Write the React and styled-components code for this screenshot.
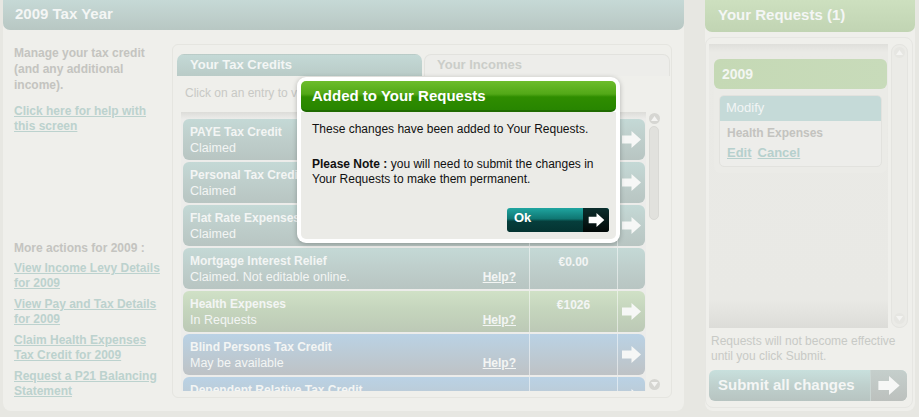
import React from 'react'
import styled, { createGlobalStyle } from 'styled-components'

const GlobalStyle = createGlobalStyle`
  html, body { margin: 0; padding: 0; }
  body {
    background: #e7e7e2;
    font-family: "Liberation Sans", Arial, sans-serif;
    width: 919px;
    height: 417px;
    overflow: hidden;
  }
`

const Page = styled.div`
  position: relative;
  display: flex;
  gap: 21px;
  padding: 0 4px 0 3px;
  height: 417px;
  box-sizing: border-box;
`

const MainPanel = styled.section`
  width: 681px;
  height: 411px;
  display: flex;
  flex-direction: column;
  background: #efefeb;
  border-radius: 0 0 8px 8px;
`

const PanelHeader = styled.h1`
  margin: 0;
  height: ${p => p.$h}px;
  line-height: ${p => p.$h - 2}px;
  padding-left: ${p => p.$pad}px;
  font-size: 15px;
  font-weight: bold;
  color: #f4f6f5;
  border-radius: 0 0 7px 7px;
  background: ${p => p.$green
    ? 'linear-gradient(#cde0bf, #c1d4b3)'
    : 'linear-gradient(#c6d9d6, #b8c7c3)'};
`

const MainBody = styled.div`
  flex: 1;
  display: flex;
  padding: 13px 9px 0 11px;
`

const SideCol = styled.div`
  width: 158px;
  padding-top: 2px;
  display: flex;
  flex-direction: column;
  font-size: 12px;
  line-height: 16px;
  font-weight: bold;
  color: #c4c4c0;
`

const Intro = styled.p`
  margin: 0;
  width: 140px;
`

const SideLink = styled.a`
  display: block;
  width: 150px;
  margin-top: ${p => p.$mt || 5}px;
  line-height: 15px;
  color: #bcd2ce;
  text-decoration: underline;
  cursor: pointer;
`

const MoreTitle = styled.div`
  margin-top: 107px;
  line-height: 15px;
`

const CenterBox = styled.div`
  width: 500px;
  height: 354px;
  margin-top: 1px;
  box-sizing: border-box;
  border: 1px solid #e5e5e0;
  border-radius: 6px;
  padding: 9px 4px 0 4px;
  display: flex;
  flex-direction: column;
`

const Tabs = styled.div`
  display: grid;
  grid-template-columns: 245px 246px;
  gap: 2px;
`

const Tab = styled.div`
  height: 22px;
  box-sizing: border-box;
  line-height: 20px;
  padding-left: 12px;
  font-size: 13px;
  font-weight: bold;
  border-radius: 7px 7px 0 0;
  color: ${p => p.$active ? '#f3f6f5' : '#cbcdc9'};
  background: ${p => p.$active ? 'linear-gradient(#c4d9d6, #b9cbc7)' : '#ededea'};
  border: 1px solid ${p => p.$active ? 'transparent' : '#e2e2de'};
  border-bottom: none;
`

const Hint = styled.div`
  height: 36px;
  line-height: 34px;
  padding-left: 8px;
  font-size: 12px;
  color: #c8c9c5;
  white-space: nowrap;
  overflow: hidden;
`

const ListArea = styled.div`
  display: flex;
  height: 279px;
`

const Viewport = styled.div`
  width: 465px;
  margin-left: 4px;
  overflow: hidden;
  padding: 7px 0 0 2px;
  box-sizing: border-box;
  background: linear-gradient(#dcdcd8, #ececea 7px, #ececea);
`

const Row = styled.div`
  width: 462px;
  height: 41px;
  margin-bottom: 2px;
  display: grid;
  grid-template-columns: 346px 88px 28px;
  border-radius: 6px;
  color: #f3f5f4;
  font-size: 12px;
  background: ${p => ({
    teal: 'linear-gradient(#c4d9d6, #bfcfcc 45%, #b8c5c2)',
    green: 'linear-gradient(#d0e1c6, #c5d5bd 45%, #bcc9b6)',
    blue: 'linear-gradient(#bad2e5, #bccbd6 45%, #bec2c5)',
  })[p.$kind]};
`

const NameCell = styled.div`
  padding: 5px 13px 0 7px;
  line-height: 16px;
`

const RowTitle = styled.div`
  font-weight: bold;
  white-space: nowrap;
`

const SubLine = styled.div`
  display: flex;
  justify-content: space-between;
  font-size: 12.5px;
`

const Help = styled.a`
  font-size: 12px;
  font-weight: bold;
  text-decoration: underline;
`

const AmountCell = styled.div`
  border-left: 1px solid rgba(255, 255, 255, 0.5);
  text-align: center;
  font-weight: bold;
  padding-top: 6px;
  line-height: 16px;
`

const ArrowCell = styled.div`
  border-left: 1px solid rgba(255, 255, 255, 0.5);
  display: flex;
  align-items: center;
  justify-content: center;
  color: #f6f7f6;
`

const ScrollTrack = styled.div`
  width: 12px;
  margin-left: 2px;
  display: flex;
  flex-direction: column;
  align-items: center;
  gap: 2px;
  padding-top: 1px;
`

const ScrollBtn = styled.div`
  width: 11px;
  height: 11px;
  border-radius: 50%;
  background: ${p => p.$faint ? '#e6e6e2' : '#d6d6d2'};
  display: flex;
  align-items: center;
  justify-content: center;
  color: #f4f4f2;
  margin-top: ${p => p.$end ? 'auto' : '0'};
  margin-bottom: ${p => p.$end ? '1px' : '0'};
`

const Thumb = styled.div`
  width: 10px;
  height: 94px;
  border-radius: 5px;
  background: #e1e1dd;
  border: 1px solid #d9d9d5;
  box-sizing: border-box;
`

const SidePanel = styled.section`
  width: 210px;
  height: 411px;
  display: flex;
  flex-direction: column;
  background: #efefeb;
  border-radius: 0 0 8px 8px;
`

const SideBody = styled.div`
  flex: 1;
  margin: 5px 2px 3px 0;
  border: 1px solid #e6e6e2;
  border-radius: 8px;
  padding: 6px 4px 0 3px;
  display: flex;
  flex-direction: column;
`

const ReqBox = styled.div`
  display: flex;
  height: 284px;
`

const ReqViewport = styled.div`
  width: 183px;
  padding: 15px 0 0 5px;
  box-sizing: border-box;
  background: linear-gradient(#dfdfdb, #eaeae6 8px, #e9e9e5 90%, #dcdcd8);
`

const YearGroup = styled.div`
  width: 173px;
  border-radius: 6px;
  background: #ebebe7;
  padding-bottom: 6px;
`

const YearBar = styled.div`
  height: 30px;
  line-height: 30px;
  padding-left: 8px;
  border-radius: 6px;
  font-size: 14px;
  font-weight: bold;
  color: #f3f6f2;
  background: linear-gradient(90deg, #c5d9b5, #c8dbba);
`

const Card = styled.div`
  margin: 6px 5px 0 5px;
  border: 1px solid #e2e2de;
  border-radius: 5px;
  background: #ededea;
  overflow: hidden;
`

const CardHead = styled.div`
  height: 25px;
  line-height: 24px;
  padding-left: 6px;
  font-size: 13px;
  color: #f2f5f5;
  background: #c5dad8;
`

const CardText = styled.div`
  padding: 4px 7px 5px;
  font-size: 12px;
  line-height: 16px;
  font-weight: bold;
  color: #c3c3bf;
`

const CardLinks = styled.div`
  display: flex;
  gap: 6px;
  margin-top: 4px;
  font-size: 13px;
  color: #b6d0cd;
  a { text-decoration: underline; }
`

const SideScroll = styled.div`
  width: 17px;
  margin-left: 3px;
  border-radius: 8px;
  background: #ebebe7;
  border: 1px solid #e4e4e0;
  box-sizing: border-box;
  display: flex;
  flex-direction: column;
  align-items: center;
  padding: 2px 0;
`

const Note = styled.p`
  margin: 6px 0 0 2px;
  font-size: 12px;
  line-height: 15px;
  color: #c8cac6;
`

const SubmitBtn = styled.button`
  margin-top: 6px;
  width: 198px;
  height: 31px;
  padding: 0;
  border: none;
  border-radius: 6px;
  display: flex;
  overflow: hidden;
  font-family: inherit;
  cursor: pointer;
  background: linear-gradient(#c8e0dd, #bfd0cd 50%, #b7c4c1);
`

const SubmitLabel = styled.span`
  flex: 1;
  text-align: left;
  padding-left: 9px;
  line-height: 30px;
  font-size: 15px;
  font-weight: bold;
  color: #f4f6f5;
`

const SubmitArrow = styled.span`
  width: 36px;
  display: flex;
  align-items: center;
  justify-content: center;
  color: #f6f7f6;
  border-left: 1px solid #cbd6d3;
  background: linear-gradient(#c5cfcc, #bcc0bd);
`

const Modal = styled.div`
  position: absolute;
  left: 297px;
  top: 77px;
  width: 323px;
  height: 166px;
  box-sizing: border-box;
  padding: 4px;
  background: #ffffff;
  border-radius: 9px;
  box-shadow: 0 1px 5px rgba(0, 0, 0, 0.25);
  display: flex;
  flex-direction: column;
`

const ModalHead = styled.h2`
  margin: 0;
  height: 31px;
  box-sizing: border-box;
  line-height: 29px;
  padding-left: 11px;
  font-size: 15px;
  font-weight: bold;
  color: #ffffff;
  border-radius: 5px;
  border-bottom: 2px solid #1f6a00;
  background: linear-gradient(#6dbd2c, #52a817 45%, #2f8d00 55%, #288500);
`

const ModalBody = styled.div`
  flex: 1;
  background: #ebebe7;
  border-radius: 0 0 5px 5px;
  padding: 10px 7px 7px 11px;
  display: flex;
  flex-direction: column;
  font-size: 12px;
  line-height: 15px;
  color: #111;
  p { margin: 0 0 20px; }
`

const OkBtn = styled.button`
  align-self: flex-end;
  margin-top: auto;
  width: 102px;
  height: 24px;
  padding: 0;
  border: none;
  border-radius: 3px;
  overflow: hidden;
  display: flex;
  font-family: inherit;
  cursor: pointer;
  background: linear-gradient(#1fa5a0, #0f7672 45%, #063e3c 55%, #043331);
`

const OkLabel = styled.span`
  flex: 1;
  text-align: left;
  padding-left: 7px;
  line-height: 20px;
  font-size: 13px;
  font-weight: bold;
  color: #ffffff;
`

const OkArrow = styled.span`
  width: 26px;
  display: flex;
  align-items: center;
  justify-content: center;
  color: #ffffff;
  background: linear-gradient(#0b2e2d, #020807);
`

const Arrow = ({ w = 19, h = 17 }) => (
  <svg width={w} height={h} viewBox="0 0 19 17">
    <path d="M0 4.5h9.5V0L19 8.5 9.5 17v-4.5H0z" fill="currentColor" />
  </svg>
)

const Tri = ({ up }) => (
  <svg width="7" height="5" viewBox="0 0 7 5">
    <path d={up ? 'M0 5L3.5 0 7 5z' : 'M0 0h7L3.5 5z'} fill="currentColor" />
  </svg>
)

const credits = [
  { name: 'PAYE Tax Credit', status: 'Claimed', kind: 'teal', arrow: true },
  { name: 'Personal Tax Credit', status: 'Claimed', kind: 'teal', arrow: true },
  { name: 'Flat Rate Expenses', status: 'Claimed', kind: 'teal', arrow: true },
  { name: 'Mortgage Interest Relief', status: 'Claimed. Not editable online.', kind: 'teal', amount: '€0.00', help: true },
  { name: 'Health Expenses', status: 'In Requests', kind: 'green', amount: '€1026', help: true, arrow: true },
  { name: 'Blind Persons Tax Credit', status: 'May be available', kind: 'blue', help: true, arrow: true },
  { name: 'Dependent Relative Tax Credit', status: 'May be available', kind: 'blue', help: true, arrow: true },
]

const moreLinks = [
  'View Income Levy Details for 2009',
  'View Pay and Tax Details for 2009',
  'Claim Health Expenses Tax Credit for 2009',
  'Request a P21 Balancing Statement',
]

export default function App() {
  return (
    <>
      <GlobalStyle />
      <Page>
        <MainPanel>
          <PanelHeader $h={30} $pad={12}>2009 Tax Year</PanelHeader>
          <MainBody>
            <SideCol>
              <Intro>Manage your tax credit (and any additional income).</Intro>
              <SideLink $mt={11}>Click here for help with this screen</SideLink>
              <MoreTitle>More actions for 2009 :</MoreTitle>
              {moreLinks.map((l, i) => (
                <SideLink key={l} $mt={i === 0 ? 5 : 6}>{l}</SideLink>
              ))}
            </SideCol>
            <CenterBox>
              <Tabs>
                <Tab $active>Your Tax Credits</Tab>
                <Tab>Your Incomes</Tab>
              </Tabs>
              <Hint>Click on an entry to view more details or to make a change.</Hint>
              <ListArea>
                <Viewport>
                  {credits.map(c => (
                    <Row key={c.name} $kind={c.kind}>
                      <NameCell>
                        <RowTitle>{c.name}</RowTitle>
                        <SubLine>
                          <span>{c.status}</span>
                          {c.help && <Help>Help?</Help>}
                        </SubLine>
                      </NameCell>
                      <AmountCell>{c.amount}</AmountCell>
                      <ArrowCell>{c.arrow && <Arrow />}</ArrowCell>
                    </Row>
                  ))}
                </Viewport>
                <ScrollTrack>
                  <ScrollBtn><Tri up /></ScrollBtn>
                  <Thumb />
                  <ScrollBtn $end><Tri /></ScrollBtn>
                </ScrollTrack>
              </ListArea>
            </CenterBox>
          </MainBody>
        </MainPanel>

        <SidePanel>
          <PanelHeader $h={32} $pad={13} $green>Your Requests (1)</PanelHeader>
          <SideBody>
            <ReqBox>
              <ReqViewport>
                <YearGroup>
                  <YearBar>2009</YearBar>
                  <Card>
                    <CardHead>Modify</CardHead>
                    <CardText>
                      Health Expenses
                      <CardLinks>
                        <a>Edit</a>
                        <a>Cancel</a>
                      </CardLinks>
                    </CardText>
                  </Card>
                </YearGroup>
              </ReqViewport>
              <SideScroll>
                <ScrollBtn $faint><Tri up /></ScrollBtn>
                <ScrollBtn $faint $end><Tri /></ScrollBtn>
              </SideScroll>
            </ReqBox>
            <Note>Requests will not become effective until you click Submit.</Note>
            <SubmitBtn>
              <SubmitLabel>Submit all changes</SubmitLabel>
              <SubmitArrow><Arrow w={22} h={19} /></SubmitArrow>
            </SubmitBtn>
          </SideBody>
        </SidePanel>

        <Modal>
          <ModalHead>Added to Your Requests</ModalHead>
          <ModalBody>
            <p>These changes have been added to Your Requests.</p>
            <p><b>Please Note :</b> you will need to submit the changes in Your Requests to make them permanent.</p>
            <OkBtn>
              <OkLabel>Ok</OkLabel>
              <OkArrow><Arrow w={17} h={14} /></OkArrow>
            </OkBtn>
          </ModalBody>
        </Modal>
      </Page>
    </>
  )
}
